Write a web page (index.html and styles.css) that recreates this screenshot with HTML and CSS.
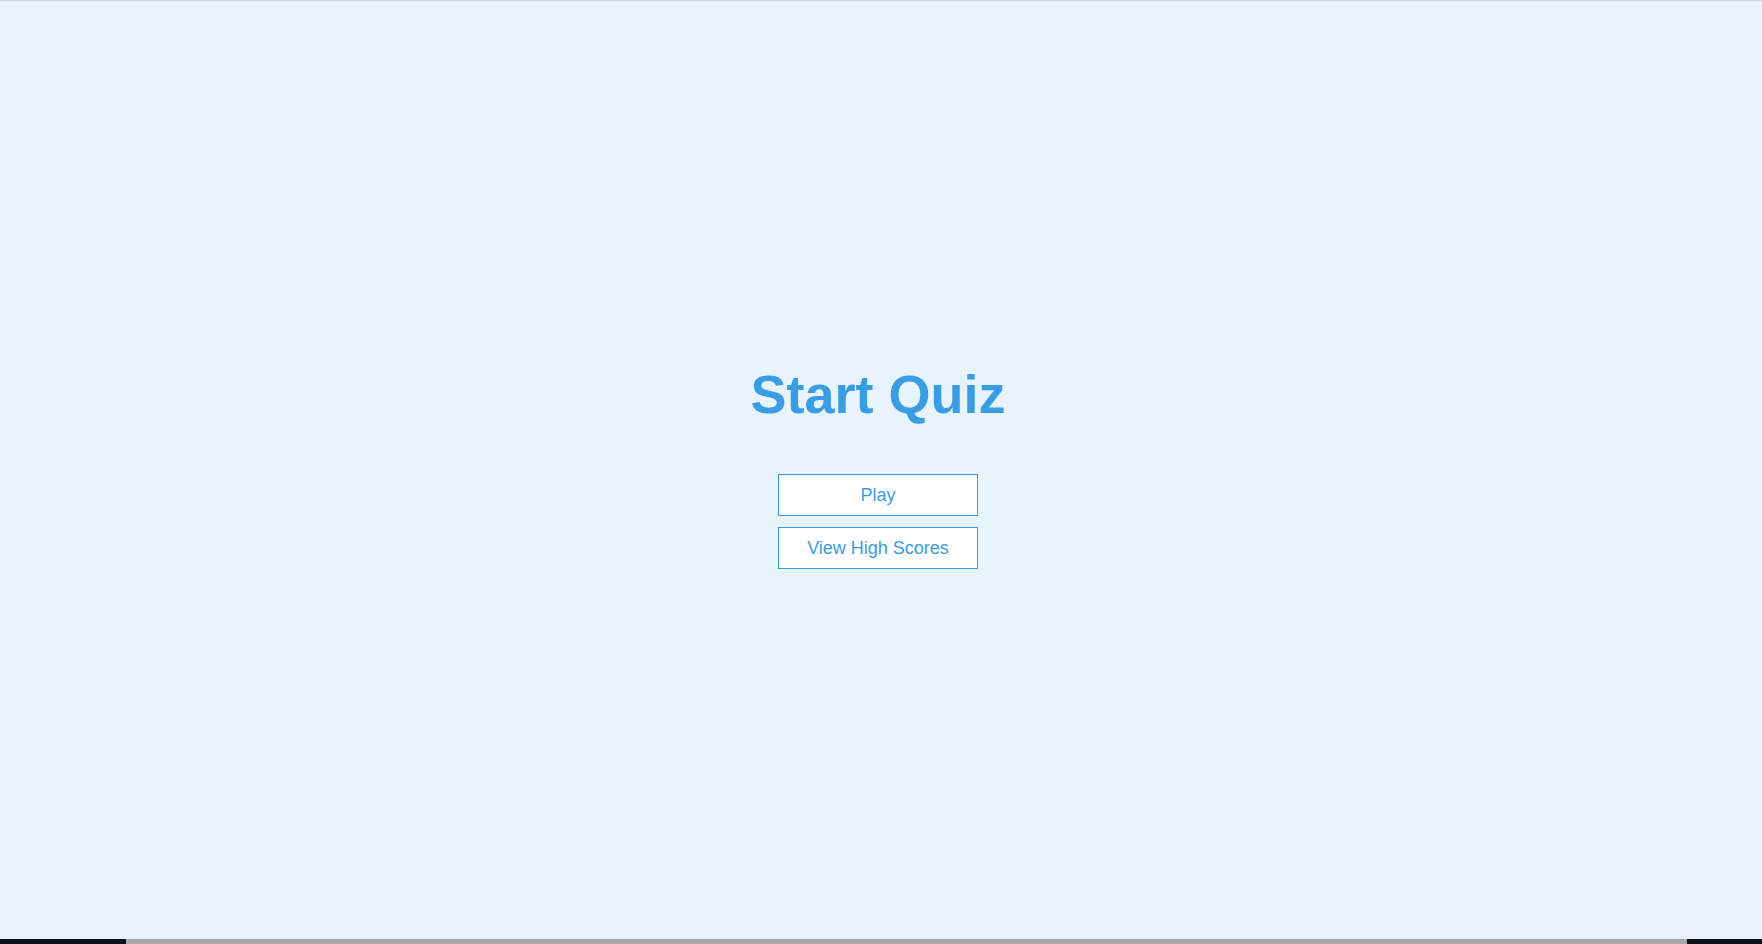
FILE: index.html
```html
<!DOCTYPE html>
<html lang="en">
<head>
<meta charset="utf-8">
<title>Start Quiz</title>
<link rel="stylesheet" href="styles.css">
</head>
<body>
<div class="topline"></div>
<main class="home">
  <h1 class="title">Start Quiz</h1>
  <div class="actions">
    <a class="btn" href="#">Play</a>
    <a class="btn" href="#">View High Scores</a>
  </div>
</main>
<div class="bottombar">
  <div class="bb-dark bb-left"></div>
  <div class="bb-gray"></div>
  <div class="bb-dark bb-right"></div>
</div>
</body>
</html>
```
FILE: styles.css
```css
* { box-sizing: border-box; }
html, body {
  margin: 0;
  padding: 0;
  height: 100%;
}
body {
  background: #e7f4fd;
  font-family: "Liberation Sans", Arial, sans-serif;
  color: #3a9de4;
  display: flex;
  flex-direction: column;
  overflow: hidden;
}
.topline {
  height: 1px;
  background: #cfd4d9;
  flex: none;
}
.home {
  flex: 1;
  display: flex;
  flex-direction: column;
  align-items: center;
  padding-top: 362px;
  padding-right: 6px;
}
.title {
  margin: 0;
  font-size: 54px;
  line-height: 62px;
  font-weight: 700;
  color: #3a9de4;
}
.actions {
  margin-top: 49px;
  display: flex;
  flex-direction: column;
  gap: 11px;
}
.btn {
  display: flex;
  align-items: center;
  justify-content: center;
  width: 200px;
  height: 42px;
  background: #ffffff;
  border: 1px solid #3a9de4;
  color: #3a9de4;
  font-size: 18px;
  text-decoration: none;
}
.bottombar {
  flex: none;
  height: 5px;
  display: flex;
}
.bb-dark {
  background: #06111b;
}
.bb-left { width: 126px; }
.bb-right { flex: 1; }
.bb-gray {
  width: 1561px;
  background: #a9a9a9;
}
```
